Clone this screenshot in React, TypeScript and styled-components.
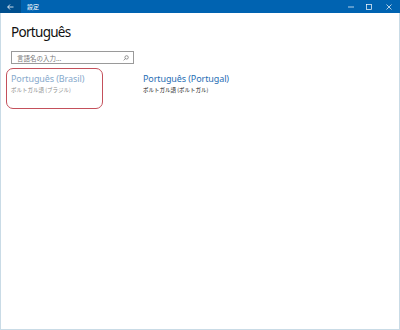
import React from 'react';
import styled, { createGlobalStyle } from 'styled-components';

const Global = createGlobalStyle`
  html, body { margin: 0; padding: 0; background: #fff; }
  body { font-family: "Noto Sans", "Noto Sans CJK JP", sans-serif; }
`

const Window = styled.div`
  width: 400px;
  height: 330px;
  box-sizing: border-box;
  border: 1px solid #c9dbe6;
  border-top: none;
  display: flex;
  flex-direction: column;
  background: #fff;
`
const TitleBar = styled.div`
  height: 13px;
  background: #0063b1;
  display: flex;
  align-items: center;
  color: #fff;
  margin: 0 -1px;
`
const BackButton = styled.div`
  width: 21px;
  height: 13px;
  background: #004f8e;
  display: flex;
  align-items: center;
  justify-content: center;
`
const Title = styled.span`
  font-size: 6px;
  margin-left: 6px;
  flex: 1;
  font-family: "Noto Sans CJK JP", sans-serif;
`
const Control = styled.div<{ $wide?: boolean }>`
  width: ${p => (p.$wide ? 22 : 18)}px;
  height: 13px;
  display: flex;
  align-items: center;
  justify-content: center;
`
const Content = styled.div`
  padding: 9px 10px 0 10px;
  display: flex;
  flex-direction: column;
`
const Heading = styled.h1`
  margin: 0;
  font-weight: 400;
  font-size: 13.5px;
  letter-spacing: -0.7px;
  line-height: 20px;
  color: #111;
  font-family: "Noto Sans", sans-serif;
`
const SearchBox = styled.div`
  margin-top: 9px;
  width: 123px;
  height: 13px;
  box-sizing: border-box;
  border: 1px solid #9a9a9a;
  display: flex;
  align-items: center;
  padding: 0 4px 0 5px;
`
const Placeholder = styled.span`
  flex: 1;
  font-size: 6.5px;
  color: #777;
  font-family: "Noto Sans CJK JP", sans-serif;
`
const Grid = styled.div`
  margin-top: 4px;
  margin-left: -5px;
  display: grid;
  grid-template-columns: 132px 150px;
`
const Item = styled.div<{ $selected?: boolean }>`
  box-sizing: border-box;
  height: 41px;
  width: 97px;
  padding: 3px 0 0 4px;
  border: 1px solid ${p => (p.$selected ? '#c4505b' : 'transparent')};
  border-radius: 7px;
`
const Name = styled.div<{ $selected?: boolean }>`
  font-size: 9px;
  letter-spacing: -0.1px;
  line-height: 14px;
  color: ${p => (p.$selected ? '#86a9cc' : '#1f6eb4')};
  white-space: nowrap;
  font-family: "Noto Sans", sans-serif;
`
const Sub = styled.div<{ $selected?: boolean }>`
  font-size: 5.5px;
  line-height: 9px;
  color: ${p => (p.$selected ? '#8a8a8a' : '#111')};
  white-space: nowrap;
  font-family: "Noto Sans CJK JP", sans-serif;
`

export default function App() {
  return (
    <>
      <Global />
      <Window>
        <TitleBar>
          <BackButton>
            <svg width="7" height="6" viewBox="0 0 7 6">
              <path d="M3 0.5 L0.7 3 L3 5.5 M0.7 3 H6.5" stroke="#fff" strokeWidth="0.8" fill="none" />
            </svg>
          </BackButton>
          <Title>設定</Title>
          <Control>
            <svg width="6" height="2" viewBox="0 0 6 2"><path d="M0 1 H6" stroke="#fff" strokeWidth="0.7" /></svg>
          </Control>
          <Control>
            <svg width="6" height="6" viewBox="0 0 6 6"><rect x="0.5" y="0.5" width="5" height="5" stroke="#fff" strokeWidth="0.7" fill="none" /></svg>
          </Control>
          <Control $wide>
            <svg width="6" height="6" viewBox="0 0 6 6"><path d="M0.5 0.5 L5.5 5.5 M5.5 0.5 L0.5 5.5" stroke="#fff" strokeWidth="0.7" /></svg>
          </Control>
        </TitleBar>
        <Content>
          <Heading>Português</Heading>
          <SearchBox>
            <Placeholder>言語名の入力...</Placeholder>
            <svg width="6" height="6" viewBox="0 0 6 6">
              <circle cx="3.6" cy="2.4" r="1.7" stroke="#555" strokeWidth="0.6" fill="none" />
              <path d="M2.4 3.6 L0.6 5.4" stroke="#555" strokeWidth="0.6" />
            </svg>
          </SearchBox>
          <Grid>
            <Item $selected>
              <Name $selected>Português (Brasil)</Name>
              <Sub $selected>ポルトガル語 (ブラジル)</Sub>
            </Item>
            <Item>
              <Name>Português (Portugal)</Name>
              <Sub>ポルトガル語 (ポルトガル)</Sub>
            </Item>
          </Grid>
        </Content>
      </Window>
    </>
  )
}
